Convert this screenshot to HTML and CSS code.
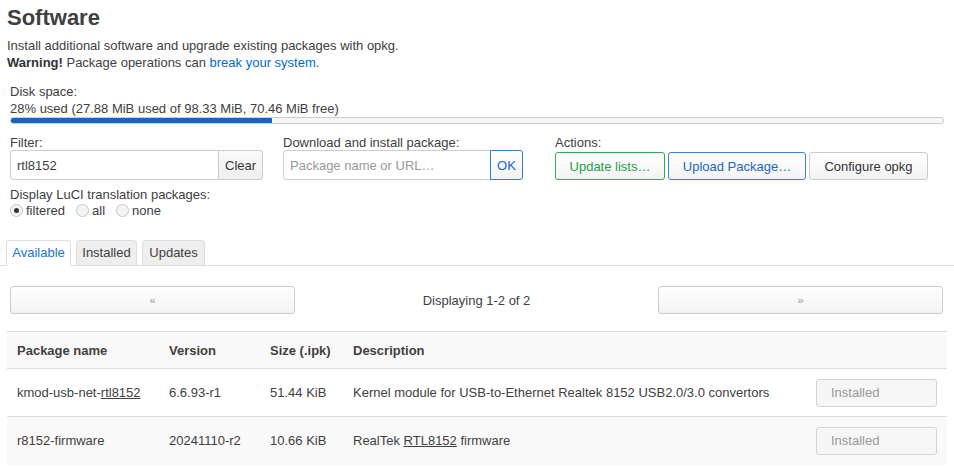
FILE: index.html
```html
<!DOCTYPE html>
<html>
<head>
<meta charset="utf-8">
<link rel="stylesheet" href="styles.css">
</head>
<body>
<div class="page">
  <h2 class="title">Software</h2>
  <div class="desc">Install additional software and upgrade existing packages with opkg.<br><strong>Warning!</strong> Package operations can <a href="#">break your system</a>.</div>

  <div class="disk">
    <div class="label">Disk space:</div>
    <div class="disk-text">28% used (27.88 MiB used of 98.33 MiB, 70.46 MiB free)</div>
    <div class="bar"><div class="fill" style="width:28%"></div></div>
  </div>

  <div class="controls">
    <div class="ctl ctl-filter">
      <div class="label">Filter:</div>
      <div class="group">
        <input class="inp" type="text" value="rtl8152">
        <button class="btn addon">Clear</button>
      </div>
    </div>
    <div class="ctl ctl-dl">
      <div class="label">Download and install package:</div>
      <div class="group">
        <input class="inp" type="text" placeholder="Package name or URL…">
        <button class="btn addon ok">OK</button>
      </div>
    </div>
    <div class="ctl ctl-actions">
      <div class="label">Actions:</div>
      <div class="actions">
        <button class="btn act green">Update lists…</button>
        <button class="btn act blue">Upload Package…</button>
        <button class="btn act conf">Configure opkg</button>
      </div>
    </div>
  </div>

  <div class="i18n">
    <div class="label">Display LuCI translation packages:</div>
    <div class="radios">
      <label class="radio"><span class="rd on"></span>filtered</label>
      <label class="radio"><span class="rd"></span>all</label>
      <label class="radio"><span class="rd"></span>none</label>
    </div>
  </div>

  <ul class="tabs">
    <li class="tab t1 active">Available</li>
    <li class="tab t2">Installed</li>
    <li class="tab t3">Updates</li>
  </ul>

  <div class="pager">
    <button class="btn pg">«</button>
    <div class="pg-info">Displaying 1-2 of 2</div>
    <button class="btn pg">»</button>
  </div>

  <table class="pkgs">
    <thead>
      <tr><th class="c-name">Package name</th><th class="c-ver">Version</th><th class="c-size">Size (.ipk)</th><th class="c-desc">Description</th><th class="c-act"></th></tr>
    </thead>
    <tbody>
      <tr><td>kmod-usb-net-<u>rtl8152</u></td><td>6.6.93-r1</td><td>51.44 KiB</td><td>Kernel module for USB-to-Ethernet Realtek 8152 USB2.0/3.0 convertors</td><td class="c-act"><button class="btn inst">Installed</button></td></tr>
      <tr class="odd"><td>r8152-firmware</td><td>20241110-r2</td><td>10.66 KiB</td><td>RealTek <u>RTL8152</u> firmware</td><td class="c-act"><button class="btn inst">Installed</button></td></tr>
    </tbody>
  </table>
</div>
</body>
</html>
```
FILE: styles.css
```css
* { box-sizing: border-box; }
html, body { margin: 0; padding: 0; background: #fff; }
body {
  font-family: "Liberation Sans", Arial, sans-serif;
  font-size: 13px;
  line-height: 17px;
  color: #404040;
}
.page { padding: 4px 7px 0 7px; }
.title {
  margin: 0;
  font-size: 22px;
  line-height: 28px;
  font-weight: bold;
  color: #404040;
}
.desc { margin-top: 5px; line-height: 17px; }
.desc strong { color: #333; }
.desc a { color: #0069d6; text-decoration: none; }

.disk { padding: 0 3px; margin-top: 12px; }
.label { line-height: 17px; }
.bar {
  margin-top: 0;
  height: 7px;
  border: 1px solid #ccc;
  border-radius: 3px;
  background: #f6f6f6;
  overflow: hidden;
}
.fill { height: 100%; background: #1566c0; }

.controls { display: flex; padding: 0 3px; margin-top: 10px; }
.ctl-filter { width: 273px; }
.ctl-dl { width: 272px; }
.group { display: flex; margin-top: -1px; }
.inp {
  height: 30px;
  border: 1px solid #ccc;
  border-radius: 3px 0 0 3px;
  padding: 4px 6px;
  font: inherit;
  color: #404040;
  outline: none;
}
.inp::placeholder { color: #999; }
.ctl-filter .inp { width: 209px; }
.ctl-dl .inp { width: 208px; }
.btn {
  font: inherit;
  color: #333;
  background: linear-gradient(#ffffff, #f2f2f2);
  border: 1px solid #ccc;
  border-radius: 3px;
  cursor: pointer;
  white-space: nowrap;
}
.addon {
  height: 30px;
  border-radius: 0 3px 3px 0;
  padding: 0 6px;
}
.ctl-filter .addon { width: 45px; margin-left: -1px; background: linear-gradient(#fafafa, #eeeeee); }
.ok { color: #1a66c7; border-color: #2b7fd6; width: 33px; padding: 0; margin-left: -1px; }
.actions { display: flex; gap: 3px; margin-top: 1px; }
.act { height: 28px; padding: 0; }
.act.green { color: #1ca049; border-color: #2faa5c; width: 110px; }
.act.blue { color: #1a66c7; border-color: #3b83d6; width: 138px; }
.act.conf { width: 119px; }

.i18n { padding: 0 3px; margin-top: 6px; }
.radios { display: flex; gap: 11px; line-height: 17px; margin-top: -1px; }
.radio { display: flex; align-items: center; }
.rd {
  width: 13px; height: 13px;
  border: 1px solid #c6c6c6;
  border-radius: 50%;
  background: #f4f4f4;
  margin-right: 3px;
  position: relative;
}
.rd.on::after {
  content: "";
  position: absolute;
  left: 3px; top: 3px;
  width: 5px; height: 5px;
  border-radius: 50%;
  background: #333;
}

.tabs {
  list-style: none;
  margin: 21px -7px 0 -7px;
  padding: 0 0 0 6px;
  display: flex;
  gap: 5px;
  border-bottom: 1px solid #ddd;
}
.tab {
  height: 25px;
  line-height: 24px;
  text-align: center;
  background: #eee;
  border: 1px solid #ddd;
  border-bottom: none;
  border-radius: 4px 4px 0 0;
  margin-bottom: -1px;
}
.t1 { width: 65px; }
.t2 { width: 61px; }
.t3 { width: 63px; }
.tab.active {
  background: #fff;
  color: #1a73d9;
  height: 26px;
}

.pager {
  display: flex;
  align-items: center;
  padding: 0 4px 0 3px;
  margin-top: 20px;
}
.pg {
  width: 285px;
  height: 28px;
  font-size: 11px;
  color: #999;
}
.pg-info { flex: 1; text-align: center; }

.pkgs {
  width: 940px;
  margin-top: 17px;
  border-collapse: collapse;
}
.pkgs th, .pkgs td {
  text-align: left;
  padding: 0 10px;
  border-top: 1px solid #ddd;
  white-space: nowrap;
}
.pkgs th { height: 37px; font-weight: bold; background: #f9f9f9; color: #404040; }
.pkgs td { height: 48px; }
.pkgs tr.odd td { background: #f9f9f9; }
.c-name { width: 152px; }
.c-ver { width: 101px; }
.c-size { width: 83px; }
.c-act { text-align: right; width: 140px; }
.inst {
  width: 121px;
  height: 28px;
  color: #999;
  text-align: left;
  padding-left: 14px;
  background: #f6f6f6;
  border-color: #d3d3d3;
}
```
